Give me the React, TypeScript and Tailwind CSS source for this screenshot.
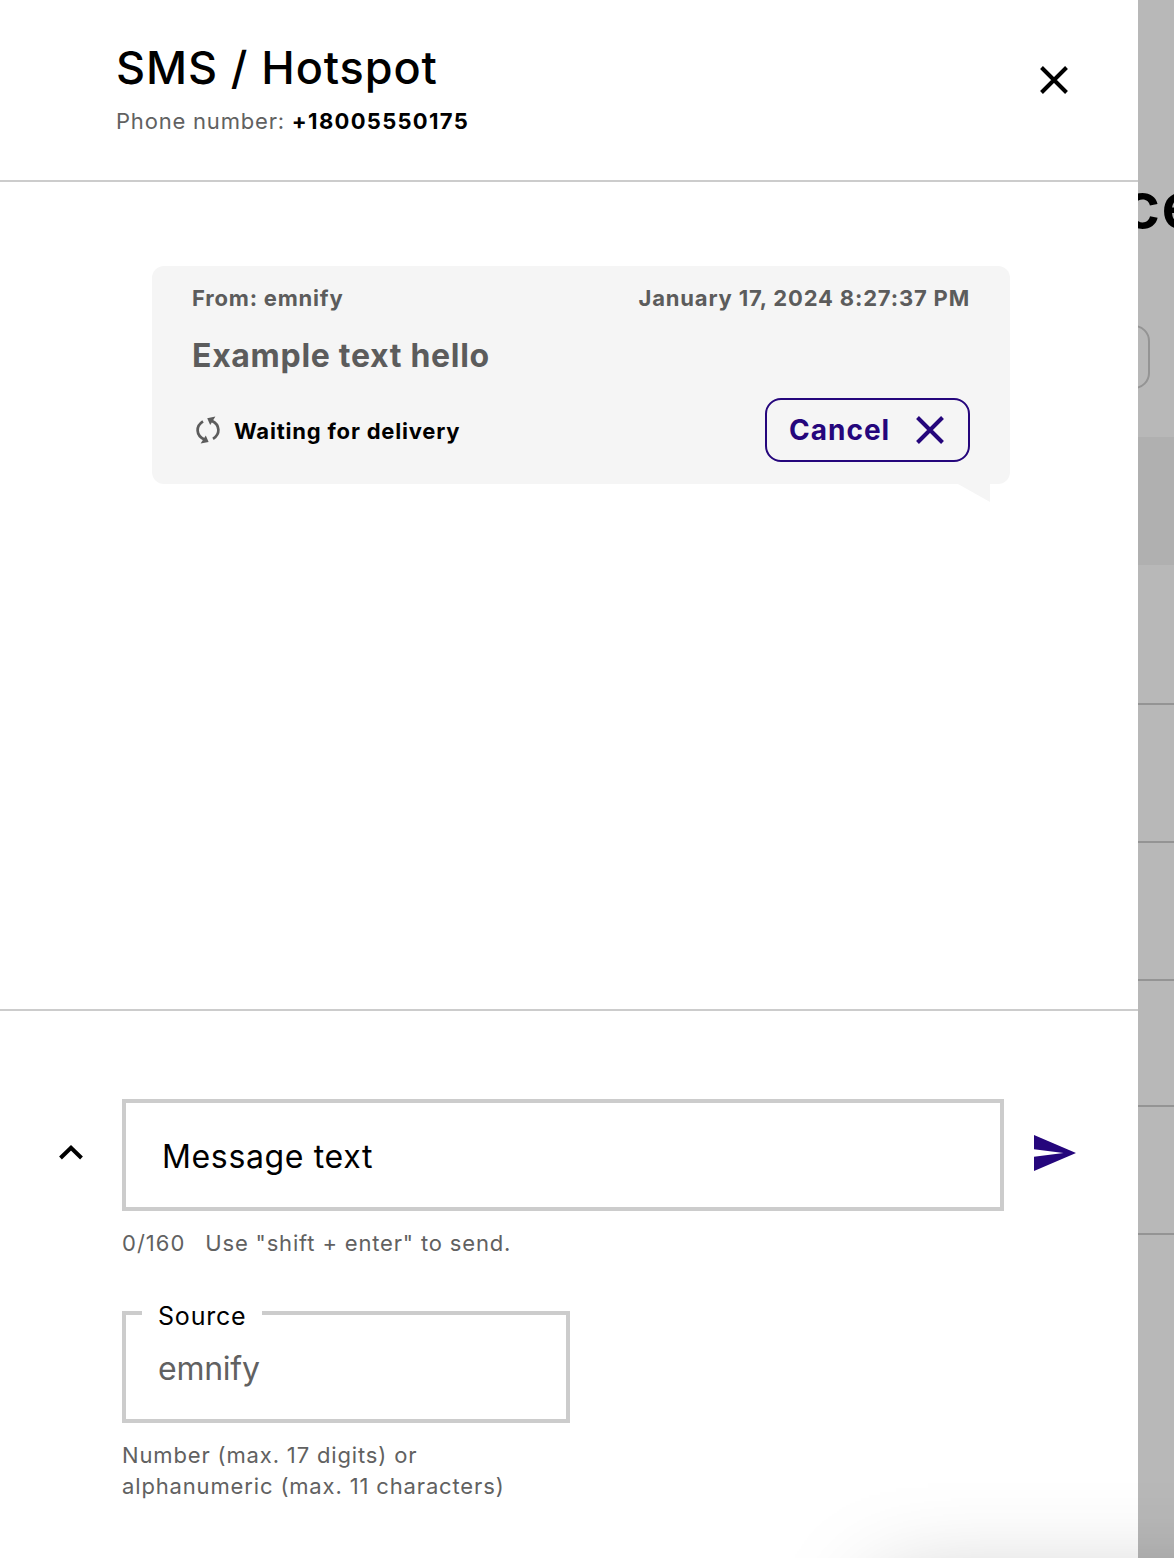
import React from "react";

function CrossIcon() {
  return (
    <svg viewBox="0 0 32 32" className="size-8 shrink-0" fill="none" stroke="currentColor" strokeWidth="4" strokeLinecap="butt">
      <path d="M3.5 3.5 28.5 28.5M28.5 3.5 3.5 28.5" />
    </svg>
  );
}

function SyncIcon() {
  return (
    <svg viewBox="0 0 32 32" className="size-8 shrink-0" fill="none" stroke="#5c5c5c" strokeWidth="2.7">
      <path d="M11 7.4C3.6 12 3.6 21.4 12.4 25.4" />
      <path d="M21 24.8C28.4 20.2 28.4 10.8 19.6 6.8" />
      <path d="M8.6 29.6 16.6 28 13.8 21.4Z" fill="#5c5c5c" stroke="none" />
      <path d="M23.4 2.4 15.2 4.2 18.2 11Z" fill="#5c5c5c" stroke="none" />
    </svg>
  );
}

function ChevronUpIcon() {
  return (
    <svg viewBox="0 0 24 16" className="h-4 w-6" fill="none" stroke="currentColor" strokeWidth="4">
      <path d="M1.5 14 12 3.8 22.5 14" />
    </svg>
  );
}

function SendIcon() {
  return (
    <svg viewBox="0 0 42 36" className="h-9 w-[42px]" fill="#25067c">
      <path d="M0 0 42 18 0 36V21.8L29.5 18 0 14.2Z" />
    </svg>
  );
}

function Header() {
  return (
    <header className="flex h-[182px] shrink-0 items-start justify-between border-b-2 border-[#cccccc] pl-[116px] pr-[68px] pt-11">
      <div>
        <h1 className="text-[45px] leading-[48px] font-medium tracking-[0.9px]">SMS / Hotspot</h1>
        <p className="mt-[13px] text-[22px] leading-8 tracking-[0.8px] text-[#616161]">
          Phone number: <strong className="font-bold tracking-[1.3px] text-black">+18005550175</strong>
        </p>
      </div>
      <button aria-label="Close" className="mt-5">
        <CrossIcon />
      </button>
    </header>
  );
}

function Message() {
  return (
    <article className="relative mx-auto h-[218px] w-[858px] rounded-xl bg-[#f5f5f5] px-10 pt-4 font-bold">
      <div className="flex justify-between text-[22px] leading-8 tracking-[0.8px] text-[#5c5c5c]">
        <span>From: emnify</span>
        <time className="tracking-[0.83px]">January 17, 2024 8:27:37 PM</time>
      </div>
      <p className="mt-[22px] text-[32px] leading-10 tracking-[0.7px] text-[#5c5c5c]">Example text hello</p>
      <div className="mt-[22px] flex h-16 items-center justify-between">
        <div className="flex items-center gap-2.5">
          <SyncIcon />
          <span className="pt-0.5 text-[22px] leading-8 tracking-[0.8px]">Waiting for delivery</span>
        </div>
        <button className="flex h-16 w-[205px] items-center justify-between rounded-2xl border-2 border-[#25067c] pl-[22px] pr-[22px] text-[28px] tracking-[1px] text-[#25067c]">
          Cancel
          <CrossIcon />
        </button>
      </div>
      <svg viewBox="0 0 32 18" className="absolute top-full right-5 h-[18px] w-8" fill="#f5f5f5">
        <path d="M0 0H32V18Z" />
      </svg>
    </article>
  );
}

function Composer() {
  return (
    <footer className="flex grow border-t-2 border-[#cccccc] pt-[88px]">
      <button aria-label="Expand" className="mt-[45px] ml-[59px] h-4">
        <ChevronUpIcon />
      </button>
      <div className="ml-[39px] w-[882px]">
        <div className="flex h-28 items-center border-4 border-[#cccccc] pt-1 pl-9 text-[32px] leading-10 tracking-[0.65px]">
          Message text
        </div>
        <div className="mt-4 flex gap-5 text-[22px] leading-8 tracking-[0.83px] text-[#616161]">
          <span className="tracking-[1px]">0/160</span>
          <span>Use "shift + enter" to send.</span>
        </div>
        <div className="relative mt-[52px] flex h-28 w-[448px] items-center border-4 border-[#cccccc] pt-1 pl-8 text-[32px] leading-10 tracking-[-0.25px] text-[#616161]">
          <label className="absolute -top-4 left-4 w-[120px] bg-white pl-4 text-[25px] leading-[34px] tracking-[0.8px] text-black">
            Source
          </label>
          emnify
        </div>
        <p className="mt-[17px] w-[448px] text-[22px] leading-[31px] tracking-[0.85px] text-[#616161]">
          Number (max. 17 digits) or
          <br />
          alphanumeric (max. 11 characters)
        </p>
      </div>
      <button aria-label="Send" className="mt-9 ml-[30px] h-9">
        <SendIcon />
      </button>
    </footer>
  );
}

function Backdrop() {
  return (
    <aside className="flex w-9 flex-col overflow-hidden bg-[#b8b8b8]">
      <div className="-ml-[15px] mt-[165px] h-20 w-24 text-[64px] leading-[80px] font-semibold tracking-[1px]">ce</div>
      <div className="-ml-8 mt-20 h-16 w-11 rounded-2xl border-2 border-[#949494]" />
      <div className="mt-12 h-32 shrink-0 bg-[#b0b0b0]" />
      <div className="h-[140px] shrink-0 border-b-2 border-[#949494]" />
      <div className="h-[138px] shrink-0 border-b-2 border-[#949494]" />
      <div className="h-[138px] shrink-0 border-b-2 border-[#949494]" />
      <div className="h-[126px] shrink-0 border-b-2 border-[#949494]" />
      <div className="h-[128px] shrink-0 border-b-2 border-[#949494]" />
    </aside>
  );
}

export default function App() {
  return (
    <div className="relative flex h-[1558px] w-[1174px] overflow-hidden bg-white font-['Inter',sans-serif] text-black">
      <section className="flex w-[1138px] flex-col">
        <Header />
        <main className="h-[827px] shrink-0 pt-[84px] pl-6">
          <Message />
        </main>
        <Composer />
      </section>
      <Backdrop />
      <div className="pointer-events-none absolute top-[1592px] left-[880px] h-[400px] w-[800px] shadow-[0_0_96px_rgba(0,0,0,0.28)]" />
    </div>
  );
}
